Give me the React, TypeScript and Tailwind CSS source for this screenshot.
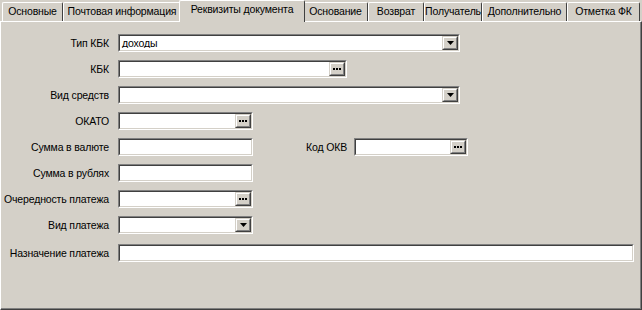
import React from "react";

const tabs = [
  { t: "Основные", w: 61 },
  { t: "Почтовая информация", w: 118 },
  { t: "Реквизиты документа", w: 122, active: true },
  { t: "Основание", w: 65 },
  { t: "Возврат", w: 56 },
  { t: "Получатель", w: 58 },
  { t: "Дополнительно", w: 85 },
  { t: "Отметка ФК", w: 73 },
];

function Tab({ t, w, active }: { t: string; w: number; active?: boolean }) {
  if (active) {
    return (
      <div
        className="relative z-10 -mx-[2px] -mb-[1px] flex h-[22px] items-start justify-center border-l border-t border-r border-l-white border-t-white border-r-[#404040] rounded-t-[2px] bg-[#d4d0c8] pt-[2px]"
        style={{ width: w + 4 }}
      >
        <div className="whitespace-nowrap">{t}</div>
      </div>
    );
  }
  return (
    <div
      className="flex h-[19px] items-start justify-center overflow-hidden border-l border-t border-r border-l-white border-t-white border-r-[#404040] rounded-t-[2px] bg-[#d4d0c8] pt-[2px]"
      style={{ width: w }}
    >
      <div className="whitespace-nowrap">{t}</div>
    </div>
  );
}

function RaisedBtn({ kind }: { kind: "drop" | "dots" }) {
  return (
    <div className="h-full w-[16px] border border-t-[#d4d0c8] border-l-[#d4d0c8] border-b-[#404040] border-r-[#404040]">
      <div className="flex h-full w-full items-center justify-center border border-t-white border-l-white border-b-[#808080] border-r-[#808080] bg-[#d4d0c8]">
        {kind === "drop" ? (
          <svg width="7" height="4" viewBox="0 0 7 4">
            <path d="M0 0h7L3.5 4z" fill="#000" />
          </svg>
        ) : (
          <svg width="8" height="2" viewBox="0 0 8 2">
            <rect x="0" y="0" width="2" height="2" fill="#000" />
            <rect x="3" y="0" width="2" height="2" fill="#000" />
            <rect x="6" y="0" width="2" height="2" fill="#000" />
          </svg>
        )}
      </div>
    </div>
  );
}

function Field({
  w,
  value,
  btn,
}: {
  w: number;
  value?: string;
  btn?: "drop" | "dots";
}) {
  return (
    <div
      className="h-[18px] shrink-0 border border-t-[#808080] border-l-[#808080] border-b-white border-r-white"
      style={{ width: w }}
    >
      <div className="flex h-full w-full items-center border border-t-[#404040] border-l-[#404040] border-b-[#d4d0c8] border-r-[#d4d0c8] bg-white">
        <div className="flex-1 truncate pl-[2px] leading-none">{value}</div>
        {btn ? <RaisedBtn kind={btn} /> : null}
      </div>
    </div>
  );
}

function Row({ label, children, className = "" }: { label: string; children: React.ReactNode; className?: string }) {
  return (
    <div className={"flex h-[18px] items-center " + className}>
      <div className="w-[109px] shrink-0 pr-[1px] text-right whitespace-nowrap">{label}</div>
      <div className="ml-[8px] flex items-center">{children}</div>
    </div>
  );
}

export default function App() {
  return (
    <div
      className="flex h-[310px] w-[642px] flex-col bg-[#d4d0c8] text-[10.5px] leading-[13px] tracking-[-0.15px] text-black"
      style={{ fontFamily: '"Liberation Sans", Arial, sans-serif' }}
    >
      <div className="flex h-[21px] items-end pl-[2px]">
        {tabs.map((tb) => (
          <Tab key={tb.t} {...tb} />
        ))}
      </div>
      <div className="flex-1 border border-t-white border-l-white border-b-[#404040] border-r-[#404040]">
        <div className="flex h-full flex-col gap-[8px] border-b border-r border-b-[#808080] border-r-[#808080] pt-[12px]">
          <Row label="Тип КБК">
            <Field w={342} value="доходы" btn="drop" />
          </Row>
          <Row label="КБК">
            <Field w={229} btn="dots" />
          </Row>
          <Row label="Вид средств">
            <Field w={342} btn="drop" />
          </Row>
          <Row label="ОКАТО">
            <Field w={135} btn="dots" />
          </Row>
          <Row label="Сумма в валюте">
            <Field w={135} />
            <div className="w-[94px] shrink-0 text-right">Код ОКВ</div>
            <div className="ml-[7px]">
              <Field w={114} btn="dots" />
            </div>
          </Row>
          <Row label="Сумма в рублях">
            <Field w={135} />
          </Row>
          <Row label="Очередность платежа">
            <Field w={135} btn="dots" />
          </Row>
          <Row label="Вид платежа">
            <Field w={135} btn="drop" />
          </Row>
          <Row label="Назначение платежа" className="mt-[2px]">
            <Field w={516} />
          </Row>
        </div>
      </div>
    </div>
  );
}
